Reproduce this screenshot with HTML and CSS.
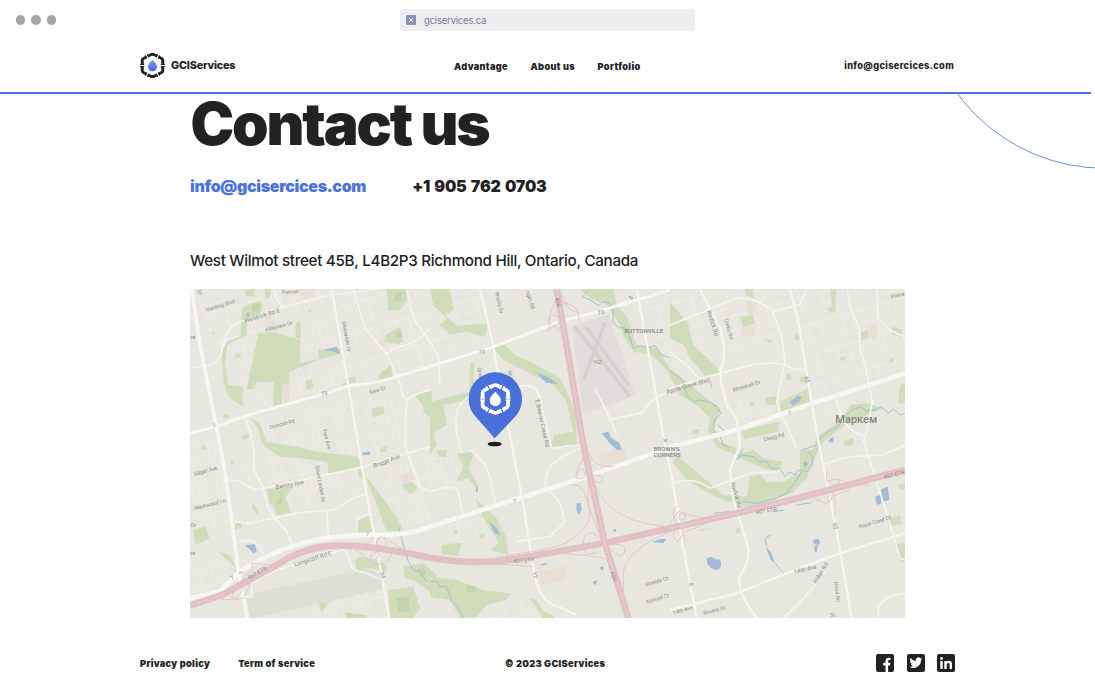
FILE: index.html
```
<!DOCTYPE html>
<html lang="en">
<head>
<meta charset="utf-8">
<title>GCIServices – Contact us</title>
<link rel="stylesheet" href="styles.css">
</head>
<body>
<div class="page">
  <div class="browser-bar">
    <div class="dots"><i></i><i></i><i></i></div>
    <div class="address">
      <svg class="favicon" viewBox="0 0 10 10"><rect width="10" height="10" rx="1.2" fill="#8b91b3"/><path d="M3 3l4 4M7 3L3 7" stroke="#f2f2f6" stroke-width="1"/></svg>
      <span>gciservices.ca</span>
    </div>
  </div>

  <header class="header">
    <a class="brand">
      <svg class="logo" viewBox="-50 -50 100 100">
        <defs>
          <linearGradient id="drop" x1="0" y1="0" x2="0" y2="1"><stop offset="0" stop-color="#82a5f5"/><stop offset="1" stop-color="#4169da"/></linearGradient>
          <g id="ring">
            <path d="M-41-2V-21Q-41-25-36-28L-23-35M-19-37L-5-44Q0-46 5-44L19-37M23-35L36-28Q41-25 41-21V-2M41 2V21Q41 25 36 28L23 35M19 37L5 44Q0 46-5 44L-19 37M-23 35L-36 28Q-41 25-41 21V2" fill="none" stroke="currentColor" stroke-width="12"/>
            <path d="M-49-4h16M-49 4h16M33-4h16M33 4h16M-29-41l6 12M-21-45l6 12M29-41l-6 12M21-45l-6 12M-29 41l6-12M-21 45l6-12M29 41l-6-12M21 45l-6-12" fill="none" stroke="currentColor" stroke-width="4"/>
          </g>
          <path id="water-drop" d="M0-24C4-16 18-9 18 5A18 18 0 0 1-18 5C-18-9-4-16 0-24Z"/>
        </defs>
        <use href="#ring"/><use href="#water-drop" fill="url(#drop)"/>
      </svg>
      <span>GCIServices</span>
    </a>
    <nav class="nav"><a>Advantage</a><a>About us</a><a>Portfolio</a></nav>
    <a class="header-mail">info@gcisercices.com</a>
  </header>
  <div class="rule"></div>
  <svg class="arc" viewBox="0 0 145 80"><circle cx="155" cy="-109" r="183.300" fill="none" stroke="#4a70dd" stroke-width=".8"/></svg>

  <main class="content">
    <h1>Contact us</h1>
    <div class="contacts"><a class="mail">info@gcisercices.com</a><a class="phone">+1 905 762 0703</a></div>
    <p class="street">West Wilmot street 45B, L4B2P3 Richmond Hill, Ontario, Canada</p>
    <svg class="map" viewBox="0 12 2145 987" preserveAspectRatio="none">
      <defs>
        <pattern id="blocks" width="78" height="52" patternUnits="userSpaceOnUse" patternTransform="rotate(-14)"><path d="M0 6H78M12 6V40Q12 46 18 46H55V6M32 6V46" class="lane"/></pattern>
        <pattern id="crescents" width="104" height="88" patternUnits="userSpaceOnUse" patternTransform="rotate(-16)"><path d="M0 10H104M18 10V55Q18 74 40 74H84V10M42 10V50H84M0 74H18" class="lane"/></pattern>
      </defs>
      <rect y="12" width="2145" height="987" fill="#e7e7df"/>
      <!-- residential blocks -->
      <g>
        <path fill="url(#crescents)" d="M20 12H420L430 40L70 200ZM440 30L720 12V240L480 295ZM720 20H870L900 180L720 235ZM1360 30L1780 12V220L1600 250L1440 300ZM1810 12H2145V250L1880 340Z"/>
        <path fill="url(#blocks)" d="M110 180L190 160L170 310L110 300ZM330 110L430 90L450 190L340 230ZM200 300L250 290V360L200 370ZM300 260L460 230L470 290L300 340ZM200 400L460 340L500 510L240 470ZM520 330L640 350L640 510H540ZM0 460L80 450L135 700L0 780ZM220 490L500 560L520 620L260 690ZM560 540L720 520V720H570ZM160 520L190 520L220 590L130 580ZM1440 430L1600 380V430L1440 480ZM1630 330L1740 340L1750 390L1640 420ZM1900 340L2000 320V400L1910 410ZM0 800L120 830L90 900L0 930ZM400 930L590 910V999H360ZM720 700L930 700V770L720 770ZM720 520L810 490L800 590L720 610ZM900 930L1090 960V999H900Z"/>
      </g>
      <!-- land use -->
      <g fill="#e8ded5">
        <path d="M325 12l50 0 2 20-40 10zM225 95l28-5 3 32-28 8zM565 165l28-8 5 22-25 8zM280 292h18v62h-18zM720 380l35 10v25l-35 15zM1465 120l30-15 5 35-25 18zM1670 50l35-6-10 45-22 5zM1655 125l40-5v28l-35 5zM2035 125l25-5v38l-22 5zM1220 510l85-25v55l-70 10zM1045 860l80-20 5 42-75 20zM625 575l40-15 10 20-30 20z"/>
      </g>
      <path fill="#e2dddc" d="M1145 125L1255 88L1335 325L1300 345L1180 385Z"/>
      <path fill="none" stroke="#d5d1cf" stroke-width="10" d="M1152 122L1320 335M1245 112L1182 282M1190 128L1315 300"/>
      <path fill="#dddfd5" d="M170 930L540 848L580 880L582 912L190 999H178Z"/>
      <!-- parks -->
      <g class="park">
        <path d="M205 145L250 142L330 165V235L450 208L452 190L385 195V225L298 260V292L278 298L275 358L250 363V290L200 292L190 312L170 312Z"/>
        <path d="M168 60L215 48V80L195 100L170 100V150L112 180L105 235L115 300L158 305V364L118 338L100 290L95 200L110 172L152 155L155 75ZM165 15L193 12V35L165 32ZM225 12h15v28h-15zM318 112h14v48h-16zM590 12h60v35l-20 28-35 2zM585 150l48-25 8 45-18 8-30-5zM575 260l28-20 5 35-48 12zM545 372l35-8 3 22-35 10zM675 332l50-15v85l-25-20v-18zM135 208l14-4 3 13-14 3zM345 288l20-6 6 25-20 7zM475 278l18-4 6 18-22 4zM455 298l14-4v8h-14zM100 392l16-4v12h-16zM155 453l22-8v14l-22 4zM33 483l12-4 6 12-14 6zM355 75l9-3v9h-9zM65 143l10-3v8h-10zM570 490l20-8v20h-18z"/>
        <path d="M180 400L210 415L228 470L320 485L380 500L500 515L520 545L415 570L412 530L330 520L270 515L232 490L215 475L205 430ZM232 612L310 605L285 638L305 683L260 690L250 660L238 655ZM505 705L545 690L548 740L500 742ZM85 800L120 810L138 850ZM10 735L48 722L58 760L15 780ZM185 660l8-3 12 28-8 3zM135 713l20-3v16l-20 8zM525 570L575 635L615 690L640 735L590 740L570 685L545 620ZM638 600l28-10 15 18-15 20-25-14zM505 550l15 10-2 25-12-10zM640 845L700 835L740 870L720 920L670 885L645 880ZM595 915L670 905L690 970L670 999H600ZM495 825L515 815L590 840V860L545 850L500 860ZM385 955L415 952L395 985ZM462 982L530 990V999H470ZM120 530l12-4v10h-12z"/>
        <path d="M720 12H780L790 75L765 90L800 122L895 115L885 155L830 140L780 150L750 120L770 100L730 60ZM905 182L945 180L975 210L1040 240L1110 280L1140 340L1160 400V480L1085 485L1090 450L1150 440L1130 350L1090 300L1020 265L940 225ZM840 232l12 0v65l-15 20zM720 350L840 320L830 345L760 360L770 420L730 445L740 480L720 510ZM800 505L855 500L835 550L865 600L860 610L835 580L800 590L820 545ZM740 495h30v20h-25zM855 640L920 700L950 760L955 810L905 795L925 770L880 700ZM755 780L815 773L805 812L755 808ZM868 748l15-3v14h-15zM790 735h14v10h-14zM720 875L800 885L880 915L960 925L950 945L890 960L860 995L810 999L780 945L720 935ZM1020 940L1040 945L1060 980L1090 990V999H1060Z"/>
        <path d="M1170 12H1270L1280 60L1310 95L1340 180L1400 190L1440 250L1500 300L1550 340L1590 370L1570 430L1590 470L1640 490L1635 510L1580 485L1555 440L1560 400L1520 360L1470 330L1430 255L1385 210L1330 200L1300 150L1290 120L1250 60L1200 40ZM1440 50L1490 110L1510 180L1580 245L1590 265L1545 272L1500 220L1480 180L1440 160ZM1665 12H1690V40L1668 30ZM1648 95L1690 90L1695 115L1660 125ZM1655 435L1770 410L1765 440L1660 462ZM1725 340L1765 332L1755 360L1725 358ZM1770 350L1855 310L1860 355L1770 385ZM1920 12h20l-5 70h-20v-12l12-5zM2015 140l20-5v25l-25 8zM2105 125l35 10-5 20-30-5zM2130 300l15-5v60l-20 0zM1790 265h12v20h-14zM1830 275h20v20l-20-3zM1815 145h12v20h-14zM1950 218l18-5v10l-18 4zM1725 162l22 2-8 10zM2100 218h10v16h-12zM1680 350h13v12h-14zM1505 435l24-3-2 16h-22zM1960 470l30-12v20l-25 5z"/>
        <path d="M1880 455L1920 430L1965 390L1980 360L2030 355L2080 370L2030 390L1980 410L1945 435L1900 470L1875 515L1850 580L1830 600L1805 625L1760 640L1680 675L1640 650L1610 650L1550 620L1490 585L1450 535L1460 510L1530 570L1600 630L1670 635L1680 575L1710 570L1730 590L1780 590L1830 565V495H1870ZM1640 510L1690 495L1720 520L1780 530L1760 560L1720 550L1650 520ZM1520 735l60-8-50 12zM1635 730l16-2v15h-12zM2100 700l30-10 3 28-28 3zM2125 600l20-6v18h-15zM2122 778l23-3v55h-15z"/>
      </g>
      <path fill="#c5d3ac" d="M185 60l25-3-5 22-18 2zM610 25l25-3v25h-23zM620 145l14-6v18h-14zM262 640l16-5v20l-15 4zM620 940l35-5 3 42-32 5zM680 850l20-2 10 18-20 10zM830 900l30 5-5 20-25-5z"/>
      <!-- rivers and ponds -->
      <g class="river">
        <path d="M1195 15L1178 35L1200 45L1225 62L1240 50L1260 55L1270 80L1268 110L1285 128L1310 130L1322 165L1330 190L1350 182L1372 188L1395 182L1415 210L1440 218"/>
        <path d="M1440 255L1455 270L1478 285L1490 330L1510 350L1530 345L1560 352L1582 365L1592 385L1575 405L1570 435L1590 455L1600 480L1615 487M1582 418l22 22M1562 290l2 18"/>
        <path d="M1835 495L1850 490L1880 480L1890 460L1915 440L1945 425L1960 400L1985 375L2010 365L2030 378L2055 375L2075 365L2095 385L2110 372L2130 390L2145 385"/>
        <path d="M1660 490L1640 525L1655 510L1690 515L1705 530L1730 530L1745 550L1770 550L1785 575L1800 560L1815 570L1825 555L1850 560L1865 545L1870 520L1855 500M1835 560L1810 600L1790 625L1760 640L1700 655L1660 650"/>
        <path d="M1742 750L1725 760L1730 785M1755 835L1768 850L1782 865M1570 685l50-5M1820 660l45-7M1750 680l30-4M625 725L640 780L655 830L670 855L690 860L710 890M720 890L740 888L750 905L770 905L785 950L800 960L820 999"/>
      </g>
      <path class="pond" d="M400 195L440 185L450 207L425 198ZM165 780L195 778L200 800L190 805ZM518 503l22-4v10l-22 2zM1040 262l35 15 28 20-35-4zM895 705L925 735L930 750L915 745ZM1160 655h12l3 20-8 15-8-15zM1235 445l20-5 8 18 25 15 8 20-14 3-26-25zM1390 770l20-8h20l-10 12-28-2zM1208 890l12-5v10l-6 6zM1230 846l10-2v10l-8 2zM1053 837l20-4v4l-18 5zM1270 732h8v8h-8zM857 610l7-6v15l-6 3zM1800 350l15-10 5-8 15 3-8 15-20 12zM1550 820l15-5 12 8 12 0 5 12-3 15-10 5-18-5-12-15zM1870 765l15-4 6 12-8 8-12-4zM1872 782h12l-4 20h-5zM1728 785l14 15 13 35-14-12zM2055 635l16-5 4 25-15 5zM2073 613l20-8 5 40-18 5zM1920 460l10-5v18l-15-3zM1840 530h12l2 10-12 5zM170 85l4-4 4 12-8 5z"/>
      <!-- local streets -->
      <g class="street-line">
        <path d="M0 250L60 240Q90 230 98 190Q108 125 150 110L260 72L420 30L570 12M250 12L262 45L280 70M490 12L525 130L590 207L625 280L640 335L650 345L645 430V480L665 540L690 605L720 620M650 345Q680 322 720 315M650 12L670 100L720 170L745 215L750 300M590 207Q610 185 650 180Q690 165 720 130M165 395L180 440L192 500V555L220 610L235 670L255 700L290 740L310 785M0 100L22 95"/>
        <path d="M110 585L145 588Q180 610 200 615L520 545L650 505L720 485M135 710L180 715L330 682L430 675L490 640L530 625M410 675L415 755M500 745V710Q510 688 545 688M145 767H180Q205 770 220 805M160 935H185V900Q190 885 260 855L460 795Q475 795 480 830Q485 862 525 862L560 880H580"/>
        <path d="M815 505Q790 420 800 380Q810 345 850 330L1000 302Q1040 298 1050 340L1085 490L1140 482H1190L1120 512L1085 540Q1060 575 1068 605L1110 655L1125 710L1080 755L980 770M840 495Q885 530 895 560L915 650M720 620Q800 595 805 620L820 695M1215 310L1260 400L1280 450M1255 405L1360 382Q1375 340 1440 320"/>
        <path d="M1440 310L1590 265L1690 238Q1770 230 1790 242Q1820 258 1850 252M1440 120L1540 80L1640 38Q1700 40 1745 75L1775 150L1785 230L1760 350L1775 390L1820 490M1750 80L1830 58L1850 12M1440 200L1500 250L1530 285"/>
        <path d="M1970 12L1985 80L2008 130L2010 190L2025 240L2047 350L2030 440L2020 465L2060 590L2110 750L2130 820L2145 825M1935 335L1960 410Q2000 455 2022 450M2060 12L2065 100Q2100 145 2145 155M1440 600Q1510 570 1560 610L1680 565L1760 560M1905 535L1980 515L2080 510L2145 480M1910 835Q1900 890 1780 999M2065 999V965Q2085 930 2145 925"/>
      </g>
      <g class="road-line">
        <path d="M425 12L475 300L510 510L530 630L560 790L598 999M870 12L910 185L955 430L975 530L1000 660L1030 850Q1045 950 1100 963L1160 990M1340 12L1375 200L1425 480L1450 600L1480 790L1520 999M1530 12L1590 130Q1608 190 1600 230Q1585 260 1595 300L1610 360L1640 400L1650 480L1620 555L1630 640L1675 790Q1680 830 1648 875Q1640 920 1700 999M1800 12L1825 110L1865 355L1890 495L1940 740L1985 999M1440 975L1640 925L1840 845L1950 805L2145 745"/>
      </g>
      <path class="main-road" stroke-width="9" d="M0 445L80 425L180 388L410 325L475 302Q540 300 620 275L905 187L1110 110L1230 78L1440 15"/>
      <path class="main-road" stroke-width="11" d="M5 12L30 180L80 430L105 560L145 855L172 999"/>
      <path class="main-road" stroke-width="14" d="M0 940L90 918L150 860Q260 785 400 760Q500 748 560 750Q660 752 720 725L970 645L1190 575L1440 487L1640 435L1865 355L2040 300L2145 265"/>
      <!-- highways and ramps -->
      <g class="ramp">
        <path d="M1065 140L1090 125Q1110 130 1115 150M1080 135Q1065 90 1095 90Q1120 100 1100 120Q1075 130 1080 90L1098 40M1110 50Q1170 55 1168 110M1110 20Q1130 80 1170 85M1195 500Q1210 550 1270 545M1180 520Q1150 570 1160 580Q1190 585 1185 560Q1170 540 1160 570M1205 570Q1250 570 1235 590Q1215 600 1205 570M1140 600Q1190 590 1200 690Q1190 750 1100 785L950 815M1215 600Q1260 715 1440 725M1195 590V660L1225 740L1245 790L1300 970L1300 870Q1300 800 1440 740M1180 780Q1180 735 1210 745Q1235 760 1240 780M1250 780Q1310 770 1305 800Q1290 830 1260 790M1225 800Q1170 820 1190 780M1100 805Q1200 810 1240 820T1300 930M860 830L1020 800M890 835L1030 845M95 925Q150 900 160 910Q140 950 125 935Q130 910 190 850L185 835L240 840M60 935Q110 950 160 940L185 890M490 785Q545 780 550 755M570 755Q545 790 580 790Q600 775 575 755Q550 760 565 810Q560 835 540 820Q540 800 580 798M580 755L640 795M490 790L560 840L590 830L610 800"/>
        <path d="M1440 715L1465 680Q1500 680 1480 705Q1460 710 1470 685L1550 700M1485 780L1480 740Q1460 700 1450 755Q1465 785 1475 750M1490 740L1560 710M1910 560V590Q1940 575 1950 590Q1930 610 1920 590Q1930 570 1980 600H2040M1850 630L1905 655Q1930 650 1930 620Q1910 630 1915 650M1935 695V630L1980 615M1460 715Q1440 670 1460 665"/>
      </g>
      <path class="highway" d="M0 962L100 928L260 840Q350 780 450 782Q540 780 720 818Q850 840 960 825L1240 775L1440 730L1640 685L1840 635L2145 555"/>
      <path class="highway" d="M1100 12L1112 80L1140 240L1175 450L1195 550L1245 775L1315 999"/>
      <path class="divider" d="M1100 12L1112 80L1140 240L1175 450L1195 550L1245 775L1315 999M1440 730L1640 685L1840 635L2145 555M0 962L100 928"/>
      <!-- labels -->
      <g class="labels">
        <text transform="translate(49 80) rotate(-17)">Harding Blvd</text>
        <text class="big" transform="translate(166 113) rotate(-17)">Weldrick Rd E</text>
        <text transform="translate(228 140) rotate(-15)">Hillsview Dr</text>
        <text transform="translate(276 28) rotate(-4)">Palmer</text>
        <text transform="translate(456 110) rotate(80)">Glenarden Cr</text>
        <text transform="translate(541 328) rotate(-18)">Kew Cr</text>
        <text transform="translate(241 432) rotate(-15)">Duncan Rd</text>
        <text transform="translate(398 434) rotate(76)">Fern Ave</text>
        <text class="num" transform="translate(395 333) rotate(-12)">73</text>
        <text transform="translate(70 427) rotate(-12)">1</text>
        <text transform="translate(0 162)">ve</text>
        <text transform="translate(22 16) rotate(80)">St</text>
        <text transform="translate(14 572) rotate(-15)">Edgar Ave</text>
        <text transform="translate(14 676) rotate(-15)">Westwood Ln</text>
        <text transform="translate(2 726)">Dr</text><text transform="translate(0 811)">ve</text>
        <text class="big" transform="translate(258 612) rotate(-10)">Bantry Ave</text>
        <text transform="translate(376 543) rotate(80)">Silver Linden Dr</text>
        <text class="big" transform="translate(551 548) rotate(-20)">Briggs Ave</text>
        <text class="big" transform="translate(314 844) rotate(-17)">Langstaff Rd E</text>
        <text class="num" transform="translate(176 884) rotate(-29)">407 ETR</text>
        <text transform="translate(528 752)">7</text><text transform="translate(125 885) rotate(-30)">7</text><text class="num" transform="translate(570 862) rotate(75)">34</text><text transform="translate(145 860) rotate(70)">1</text>
        <text transform="translate(915 22) rotate(78)">Brodie Dr</text>
        <text transform="translate(1007 19) rotate(72)">ngell Rd</text>
        <text class="num" transform="translate(1095 38) rotate(78)">404</text>
        <text class="num" transform="translate(1225 90) rotate(-15)">73</text><text class="num" transform="translate(866 207) rotate(-5)">73</text>
        <text transform="translate(1325 44) rotate(-60)">8</text>
        <text class="place" x="1303" y="144">BUTTONVILLE</text>
        <text class="ykz" x="1208" y="236">YKZ</text>
        <text transform="translate(862 248) rotate(80)">Granton</text><text transform="translate(954 258) rotate(78)">Mural</text>
        <text class="big" transform="translate(1036 345) rotate(78)">E Beaver Creek Rd</text>
        <text transform="translate(1420 470)">w</text>
        <text class="place" x="1391" y="497">BROWN'S</text><text class="place" x="1391" y="517">CORNERS</text>
        <text transform="translate(969 653)">7</text><text class="num" transform="translate(970 835) rotate(-5)">407 ETR</text>
        <text class="num" transform="translate(1027 862) rotate(75)">12</text><text class="num" transform="translate(1261 862) rotate(72)">404</text>
        <text transform="translate(1367 905) rotate(-17)">Shields Ct</text><text transform="translate(1371 956) rotate(-17)">Konrad Cr</text>
        <text class="big" transform="translate(1430 327) rotate(-16)">Apple Creek Blvd</text>
        <text class="big" transform="translate(1551 78) rotate(73)">Rodick Rd</text><text transform="translate(1603 102) rotate(75)">Corby Rd</text>
        <text transform="translate(1630 321) rotate(-17)">Whitehall Dr</text>
        <text class="num" transform="translate(1844 275) rotate(80)">65</text><text transform="translate(1796 390) rotate(-15)">7</text>
        <text transform="translate(1722 469) rotate(-14)">Clegg Rd</text><text transform="translate(2104 41) rotate(-14)">Pome</text>
        <text class="town" x="1936" y="414">Маркем</text>
        <text class="big" transform="translate(1622 593) rotate(75)">Rodick Rd</text>
        <text class="num" transform="translate(1699 688) rotate(-9)">407 ETR</text><text class="num" transform="translate(2083 582) rotate(-14)">407 ETR</text>
        <text transform="translate(2008 731) rotate(-17)">Royal Crest Ct</text><text class="num" transform="translate(1928 715) rotate(78)">65</text>
        <text class="big" transform="translate(1813 867) rotate(-14)">14th Ave</text><text class="big" transform="translate(1878 898) rotate(-58)">Alden Rd</text>
        <text transform="translate(1932 891) rotate(83)">Hood Rd</text><text transform="translate(1450 990) rotate(-17)">14th Ave</text><text transform="translate(1542 990) rotate(-15)">Riviera Dr</text><text transform="translate(1498 895) rotate(80)">8</text>
        <text transform="translate(1922 997) rotate(-10)">St</text>
      </g>
      <!-- office pin -->
      <ellipse cx="914" cy="477" rx="21" ry="7" fill="#1f1f21"/>
      <path d="M914 460L861 400A80 80 0 1 1 971 400Z" fill="#496fdb"/>
      <g color="#fff" fill="#fff" transform="translate(916 342) scale(.93)"><use href="#ring"/><use href="#water-drop"/></g>
    </svg>
  </main>

  <footer class="footer">
    <div class="legal"><a>Privacy policy</a><a>Term of service</a></div>
    <span class="copy">© 2023 GCIServices</span>
    <div class="social">
      <svg viewBox="0 0 18 18"><rect width="18" height="18" rx="2" fill="#222224"/><path d="M9.500 18v-6.500H7.200V8.800h2.300V7.100c0-2.200 1.300-3.400 3.300-3.400.9 0 1.700.1 1.700.1v2.100h-1.100c-1 0-1.300.6-1.300 1.200v1.700h2.300l-.4 2.700h-1.900V18z" fill="#fff"/></svg>
      <svg viewBox="0 0 18 18"><rect width="18" height="18" rx="2" fill="#222224"/><path transform="translate(2.600 2) scale(.54)" d="M23.600 4.900c-.9.4-1.800.7-2.800.8 1-.6 1.800-1.600 2.200-2.700-1 .6-2 1-3.100 1.200A4.900 4.900 0 0 0 11.500 8.700C7.400 8.500 3.800 6.500 1.400 3.600.1 5.800.7 8.700 2.900 10.200c-.8 0-1.600-.2-2.200-.6 0 2.300 1.600 4.400 3.900 4.900-.7.2-1.500.2-2.200.1.6 2 2.400 3.400 4.600 3.400A9.900 9.900 0 0 1-.3 20c2.200 1.400 4.800 2.200 7.500 2.200 9.100 0 14.300-7.700 14-14.600.9-.7 1.800-1.600 2.400-2.700z" fill="#fff"/></svg>
      <svg viewBox="0 0 18 18"><rect width="18" height="18" rx="2" fill="#222224"/><circle cx="4.500" cy="4.500" r="1.400" fill="#fff"/><path d="M3.300 7h2.400v8H3.300zM7.300 7h2.300v1.100c.5-.8 1.300-1.300 2.400-1.300 2.300 0 3 1.300 3 3.600V15h-2.400v-4.100c0-1.200-.3-2-1.400-2s-1.500.8-1.500 2V15H7.300z" fill="#fff"/></svg>
    </div>
  </footer>
</div>
</body>
</html>
```
FILE: styles.css
```
* { box-sizing: border-box; }
body { margin: 0; background: #fff; color: #222224; font-family: Inter, "Liberation Sans", sans-serif; }
.page { position: relative; width: 1095px; height: 673px; overflow: hidden; display: flex; flex-direction: column; }

.browser-bar { height: 40px; display: grid; grid-template-columns: 400px 295px; align-items: center; flex: none; }
.dots { display: flex; gap: 6px; padding-left: 15.5px; }
.dots i { width: 9.6px; height: 9.6px; border-radius: 50%; background: #a5a6aa; }
.address { height: 22px; border-radius: 4px; background: #eeeef0; display: flex; align-items: center; gap: 8px; padding: 0 6px; font-size: 9.5px; letter-spacing: -.2px; color: #757ba3; }
.favicon { width: 10px; height: 10px; }

.header { height: 52px; flex: none; display: grid; grid-template-columns: 314px 1fr auto; align-items: center; padding: 0 141px 0 140px; font-weight: 800; }
.brand { display: flex; align-items: center; gap: 6px; font-size: 10.8px; letter-spacing: -.18px; position: relative; top: -.5px; }
.logo { width: 25px; height: 25px; }
.nav { display: flex; gap: 22.5px; font-size: 9.2px; font-weight: 900; letter-spacing: .35px; padding-top: 1px; }
.header-mail { font-size: 9.2px; letter-spacing: .35px; padding-bottom: 1px; }
.rule { width: 1091px; height: 2px; background: #4b72de; flex: none; }
.arc { position: absolute; left: 950px; top: 94px; width: 145px; height: 80px; }

.content { padding: 0 190px; flex: none; }
h1 { margin: 0 0 0 .5px; font-size: 58.5px; line-height: 60px; font-weight: 900; letter-spacing: -2.15px; white-space: nowrap; }
.contacts { display: flex; gap: 46px; padding-top: 22px; font-size: 16px; line-height: 20px; font-weight: 900; letter-spacing: -.33px; }
.phone { letter-spacing: -.2px; word-spacing: 1.3px; }
.mail { color: #4b72de; }
.street { margin: 55px 0 0; font-size: 15.2px; line-height: 20px; font-weight: 500; letter-spacing: -.3px; white-space: nowrap; }
.map { display: block; width: 715px; height: 329px; margin-top: 18px; font-family: Roboto, sans-serif; }

.lane { fill: none; stroke: #eeeee7; stroke-width: 2.5; }
.park { fill: #d0dcba; }
.river { fill: none; stroke: #a9bfd3; stroke-width: 3; stroke-linejoin: round; }
.pond { fill: #a2bbd7; }
.street-line { fill: none; stroke: #f4f4ef; stroke-width: 5; stroke-linejoin: round; }
.road-line { fill: none; stroke: #f5f5f0; stroke-width: 7; stroke-linejoin: round; }
.main-road { fill: none; stroke: #f6f6f2; stroke-linejoin: round; }
.ramp { fill: none; stroke: #e5c5c9; stroke-width: 3; }
.highway { fill: none; stroke: #e2c0c5; stroke-width: 20; stroke-linejoin: round; }
.divider { fill: none; stroke: #ecd5d7; stroke-width: 2; }
.labels { font-size: 16px; fill: #8e8e8b; }
.labels .big { font-size: 18px; }
.labels .num { font-size: 17px; }
.labels .place { font-size: 18px; font-weight: 500; fill: #858583; }
.labels .ykz { font-size: 15px; fill: #a09878; }
.labels .town { font-size: 33px; font-weight: 500; fill: #858582; }

.footer { margin-top: 36px; height: 18px; padding: 0 140px; display: grid; grid-template-columns: 365px 1fr auto; align-items: center; font-size: 9.3px; font-weight: 900; letter-spacing: .29px; }
.legal { display: flex; gap: 28px; }
.social { display: flex; gap: 12.5px; }
.social svg { width: 18px; height: 18px; }
```
